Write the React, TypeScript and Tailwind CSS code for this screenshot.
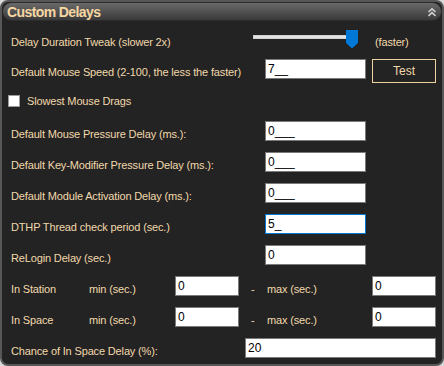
const font = { fontFamily: '"Liberation Sans", Arial, sans-serif' };

const Field = ({ value, w, focus }: { value: string; w: string; focus?: boolean }) => (
  <div
    className={`${w} h-[20px] shrink-0 bg-white border ${
      focus ? "border-[#0078d7]" : "border-[#7a7a7a]"
    } pl-[2px] text-[12px] leading-[18px] text-black`}
  >
    {value}
  </div>
);

const Label = ({ text, w }: { text: string; w: string }) => (
  <span className={`${w} shrink-0 pt-[6px] text-[11px] leading-[14px] tracking-[-0.15px] whitespace-nowrap`}>
    {text}
  </span>
);

const InputRow = ({ label, value, focus }: { label: string; value: string; focus?: boolean }) => (
  <div className="flex h-[20px] mt-[11px]">
    <Label text={label} w="w-[254px]" />
    <Field value={value} w="w-[101px]" focus={focus} />
  </div>
);

const RangeRow = ({ name, min, max }: { name: string; min: string; max: string }) => (
  <div className="flex h-[20px] mt-[11px]">
    <Label text={name} w="w-[78px]" />
    <Label text="min (sec.)" w="w-[86px]" />
    <Field value={min} w="w-[64px]" />
    <span className="w-[12px] shrink-0" />
    <Label text="-" w="w-[16px]" />
    <Label text="max (sec.)" w="w-[105px]" />
    <Field value={max} w="w-[64px]" />
  </div>
);

const App = () => {
  return (
    <div className="w-[444px] h-[366px] bg-[#d8d8d8]" style={font}>
      <div className="h-full flex flex-col rounded-[8px] border-2 border-[#575757] bg-[#232323] text-[#f2d9ab]">
        <div className="h-[19px] shrink-0 flex items-center justify-between rounded-full border border-[#2c2c2c] bg-gradient-to-b from-[#6a6a6a] to-[#3a3a3a] pl-[4px] pr-[4px]">
          <span className="text-[14px] font-bold leading-[16px] tracking-[-0.6px] text-[#f7d7a2]">Custom Delays</span>
          <svg width="10" height="10" viewBox="0 0 10 10" fill="none" stroke="#cfcfcf" strokeWidth="1.6">
            <path d="M1.5 5 L5 1.8 L8.5 5" />
            <path d="M1.5 8.8 L5 5.6 L8.5 8.8" />
          </svg>
        </div>

        <div className="flex flex-col pl-[9px]">
          {/* slider */}
          <div className="flex h-[20px] mt-[8px]">
            <Label text="Delay Duration Tweak (slower 2x)" w="w-[242px]" />
            <div className="relative w-[105px] h-[20px] shrink-0">
              <div className="absolute left-0 top-[6px] w-[96px] h-[4px] bg-[#e3e3e3] border border-[#d0d0d0]" />
              <svg className="absolute left-[93px] top-[1px]" width="12" height="19" viewBox="0 0 12 19">
                <path d="M0 0 H12 V13 L6 18.5 L0 13 Z" fill="#0078d7" />
              </svg>
            </div>
            <span className="ml-[17px] pt-[6px] text-[11px] leading-[14px] tracking-[-0.15px]">(faster)</span>
          </div>

          {/* mouse speed */}
          <div className="flex h-[20px] mt-[10px]">
            <Label text="Default Mouse Speed (2-100, the less the faster)" w="w-[254px]" />
            <Field value="7__" w="w-[101px]" />
            <button className="ml-[6px] w-[64px] h-[24px] shrink-0 border border-[#f0d3a2] text-[12px] text-[#f2d9ab]">
              Test
            </button>
          </div>

          {/* checkbox */}
          <div className="flex items-center h-[12px] mt-[16px] -ml-[3px]">
            <div className="w-[12px] h-[12px] bg-white border border-[#9a9a9a]" />
            <span className="ml-[7px] text-[11px] leading-[14px] tracking-[-0.15px]">Slowest Mouse Drags</span>
          </div>

          <div className="mt-[3px]" />
          <InputRow label="Default Mouse Pressure Delay (ms.):" value="0___" />
          <InputRow label="Default Key-Modifier Pressure Delay (ms.):" value="0___" />
          <InputRow label="Default Module Activation Delay (ms.):" value="0___" />
          <InputRow label="DTHP Thread check period (sec.)" value="5_" focus />
          <InputRow label="ReLogin Delay (sec.)" value="0" />
          <RangeRow name="In Station" min="0" max="0" />
          <RangeRow name="In Space" min="0" max="0" />

          <div className="flex h-[20px] mt-[11px]">
            <Label text="Chance of In Space Delay (%):" w="w-[234px]" />
            <Field value="20" w="w-[191px]" />
          </div>
        </div>
      </div>
    </div>
  );
};

export default App;
